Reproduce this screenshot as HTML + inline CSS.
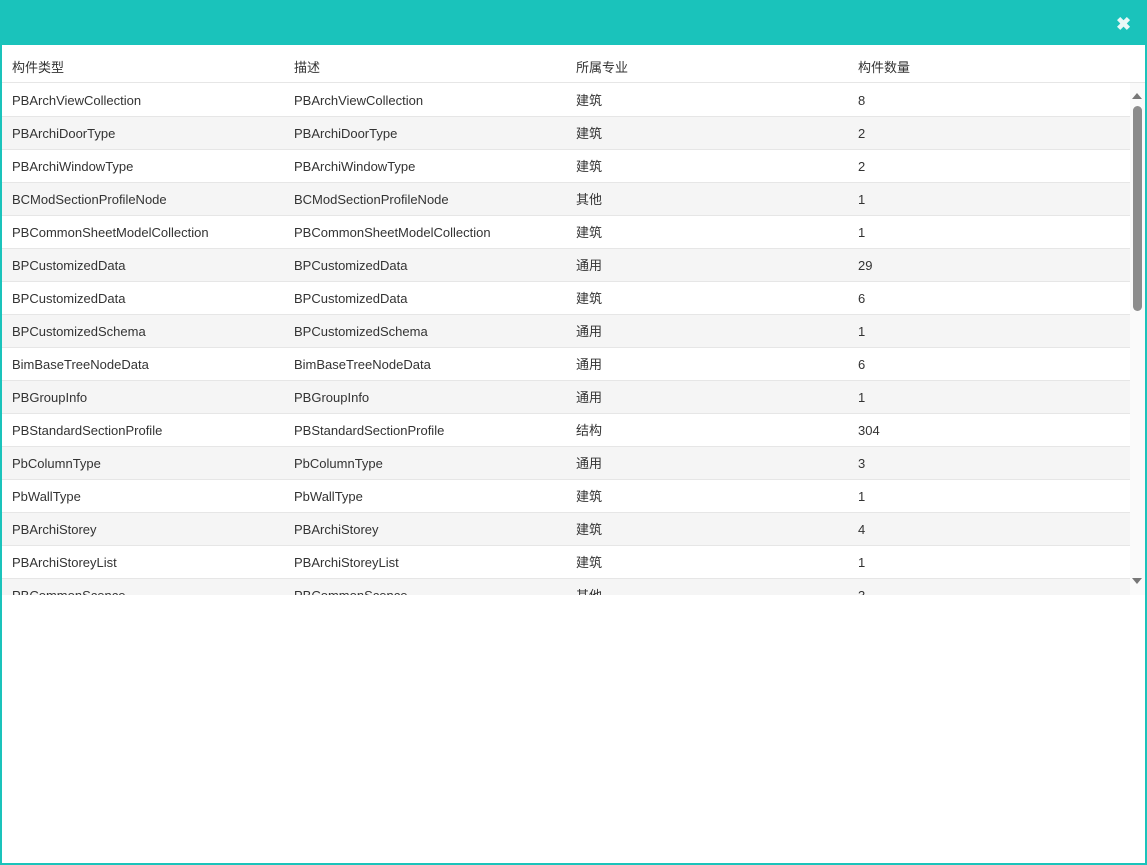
<!DOCTYPE html>
<html><head><meta charset="utf-8"><style>
*{margin:0;padding:0;box-sizing:border-box}
body{width:1147px;height:865px;background:#fff;font-family:"Liberation Sans","Noto Sans CJK SC",sans-serif;font-size:13px;color:#333;position:relative;overflow:hidden}
.frame{position:absolute;left:0;top:0;width:1147px;height:865px;border:2px solid #1ac3bb;border-top:none}
.top{position:absolute;left:0;top:0;width:1147px;height:45px;background:#1ac3bb}
.x{position:absolute;left:1116px;top:14px;color:#e8f8f7;font-size:18px;font-weight:bold}
.hdr{position:absolute;left:2px;top:45px;width:1143px;height:38px;border-bottom:1px solid #e6e6e6}
.c{position:absolute;white-space:nowrap;display:block;line-height:16px;height:16px}
.body{position:absolute;left:2px;top:84px;width:1128px;height:511px;overflow:hidden}
.row{position:relative;height:33px;border-bottom:1px solid #e6e6e6}
.row:nth-child(even){background:#f5f5f5}
.row .c{top:9px}
.sb{position:absolute;left:1130px;top:83px;width:15px;height:512px;background:#fafafa}
.thumb{position:absolute;left:3px;top:23px;width:9px;height:205px;background:#8c8c8c;border-radius:5px}
.up{position:absolute;left:2px;top:10px;width:0;height:0;border-left:5px solid transparent;border-right:5px solid transparent;border-bottom:6px solid #777}
.dn{position:absolute;left:2px;top:495px;width:0;height:0;border-left:5px solid transparent;border-right:5px solid transparent;border-top:6px solid #777}
</style></head><body>
<div class="top"><span class="x">✖</span></div>
<div class="hdr">
<span class="c" style="left:10px;top:15px">构件类型</span><span class="c" style="left:292px;top:15px">描述</span><span class="c" style="left:574px;top:15px">所属专业</span><span class="c" style="left:856px;top:15px">构件数量</span>
</div>
<div class="body">
<div class="row"><span class="c" style="left:10px">PBArchViewCollection</span><span class="c" style="left:292px">PBArchViewCollection</span><span class="c" style="left:574px">建筑</span><span class="c" style="left:856px">8</span></div>
<div class="row"><span class="c" style="left:10px">PBArchiDoorType</span><span class="c" style="left:292px">PBArchiDoorType</span><span class="c" style="left:574px">建筑</span><span class="c" style="left:856px">2</span></div>
<div class="row"><span class="c" style="left:10px">PBArchiWindowType</span><span class="c" style="left:292px">PBArchiWindowType</span><span class="c" style="left:574px">建筑</span><span class="c" style="left:856px">2</span></div>
<div class="row"><span class="c" style="left:10px">BCModSectionProfileNode</span><span class="c" style="left:292px">BCModSectionProfileNode</span><span class="c" style="left:574px">其他</span><span class="c" style="left:856px">1</span></div>
<div class="row"><span class="c" style="left:10px">PBCommonSheetModelCollection</span><span class="c" style="left:292px">PBCommonSheetModelCollection</span><span class="c" style="left:574px">建筑</span><span class="c" style="left:856px">1</span></div>
<div class="row"><span class="c" style="left:10px">BPCustomizedData</span><span class="c" style="left:292px">BPCustomizedData</span><span class="c" style="left:574px">通用</span><span class="c" style="left:856px">29</span></div>
<div class="row"><span class="c" style="left:10px">BPCustomizedData</span><span class="c" style="left:292px">BPCustomizedData</span><span class="c" style="left:574px">建筑</span><span class="c" style="left:856px">6</span></div>
<div class="row"><span class="c" style="left:10px">BPCustomizedSchema</span><span class="c" style="left:292px">BPCustomizedSchema</span><span class="c" style="left:574px">通用</span><span class="c" style="left:856px">1</span></div>
<div class="row"><span class="c" style="left:10px">BimBaseTreeNodeData</span><span class="c" style="left:292px">BimBaseTreeNodeData</span><span class="c" style="left:574px">通用</span><span class="c" style="left:856px">6</span></div>
<div class="row"><span class="c" style="left:10px">PBGroupInfo</span><span class="c" style="left:292px">PBGroupInfo</span><span class="c" style="left:574px">通用</span><span class="c" style="left:856px">1</span></div>
<div class="row"><span class="c" style="left:10px">PBStandardSectionProfile</span><span class="c" style="left:292px">PBStandardSectionProfile</span><span class="c" style="left:574px">结构</span><span class="c" style="left:856px">304</span></div>
<div class="row"><span class="c" style="left:10px">PbColumnType</span><span class="c" style="left:292px">PbColumnType</span><span class="c" style="left:574px">通用</span><span class="c" style="left:856px">3</span></div>
<div class="row"><span class="c" style="left:10px">PbWallType</span><span class="c" style="left:292px">PbWallType</span><span class="c" style="left:574px">建筑</span><span class="c" style="left:856px">1</span></div>
<div class="row"><span class="c" style="left:10px">PBArchiStorey</span><span class="c" style="left:292px">PBArchiStorey</span><span class="c" style="left:574px">建筑</span><span class="c" style="left:856px">4</span></div>
<div class="row"><span class="c" style="left:10px">PBArchiStoreyList</span><span class="c" style="left:292px">PBArchiStoreyList</span><span class="c" style="left:574px">建筑</span><span class="c" style="left:856px">1</span></div>
<div class="row"><span class="c" style="left:10px">PBCommonScence</span><span class="c" style="left:292px">PBCommonScence</span><span class="c" style="left:574px">其他</span><span class="c" style="left:856px">3</span></div>
</div>
<div class="sb"><div class="up"></div><div class="thumb"></div><div class="dn"></div></div>
<div class="frame"></div>
</body></html>
